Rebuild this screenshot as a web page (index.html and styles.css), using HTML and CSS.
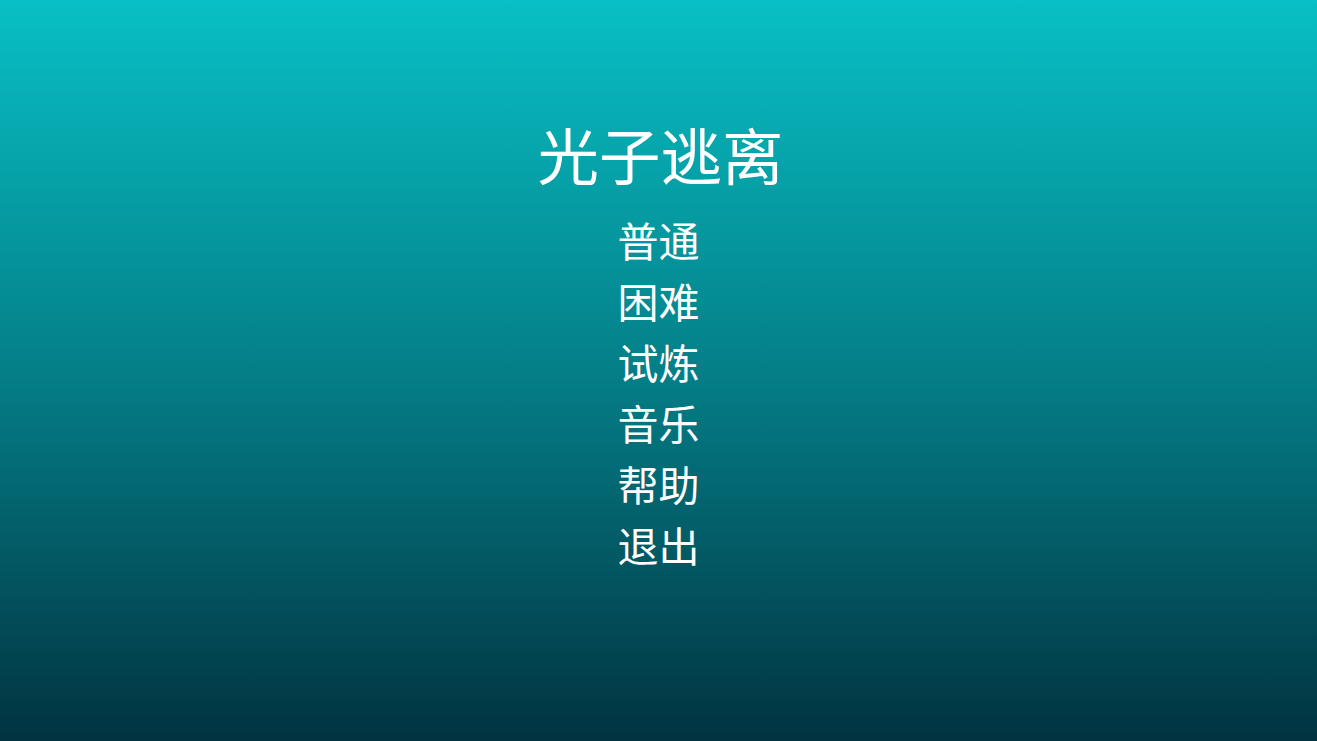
FILE: index.html
```html
<!DOCTYPE html>
<html lang="zh-CN">
<head>
<meta charset="utf-8">
<title>光子逃离</title>
<link rel="stylesheet" href="styles.css">
</head>
<body>
<main class="screen">
  <h1 class="title">光子逃离</h1>
  <nav class="menu">
    <div class="item">普通</div>
    <div class="item">困难</div>
    <div class="item">试炼</div>
    <div class="item">音乐</div>
    <div class="item">帮助</div>
    <div class="item">退出</div>
  </nav>
</main>
</body>
</html>
```

FILE: styles.css
```css
html, body {
  margin: 0;
  padding: 0;
  height: 100%;
}
body {
  background: linear-gradient(to bottom, #08c0c5 0%, #047f88 50%, #013340 100%);
  font-family: "Noto Sans CJK SC", "Noto Sans", sans-serif;
  color: #ffffff;
  overflow: hidden;
}
.screen {
  height: 741px;
  display: flex;
  flex-direction: column;
  align-items: center;
  padding-top: 123px;
  box-sizing: border-box;
}
.title {
  margin: 0 0 0 4px;
  font-size: 61.5px;
  font-weight: 400;
  line-height: 61px;
}
.menu {
  margin-top: 25px;
  display: flex;
  flex-direction: column;
  align-items: center;
}
.item {
  font-size: 41px;
  line-height: 61px;
  height: 61px;
}
```
